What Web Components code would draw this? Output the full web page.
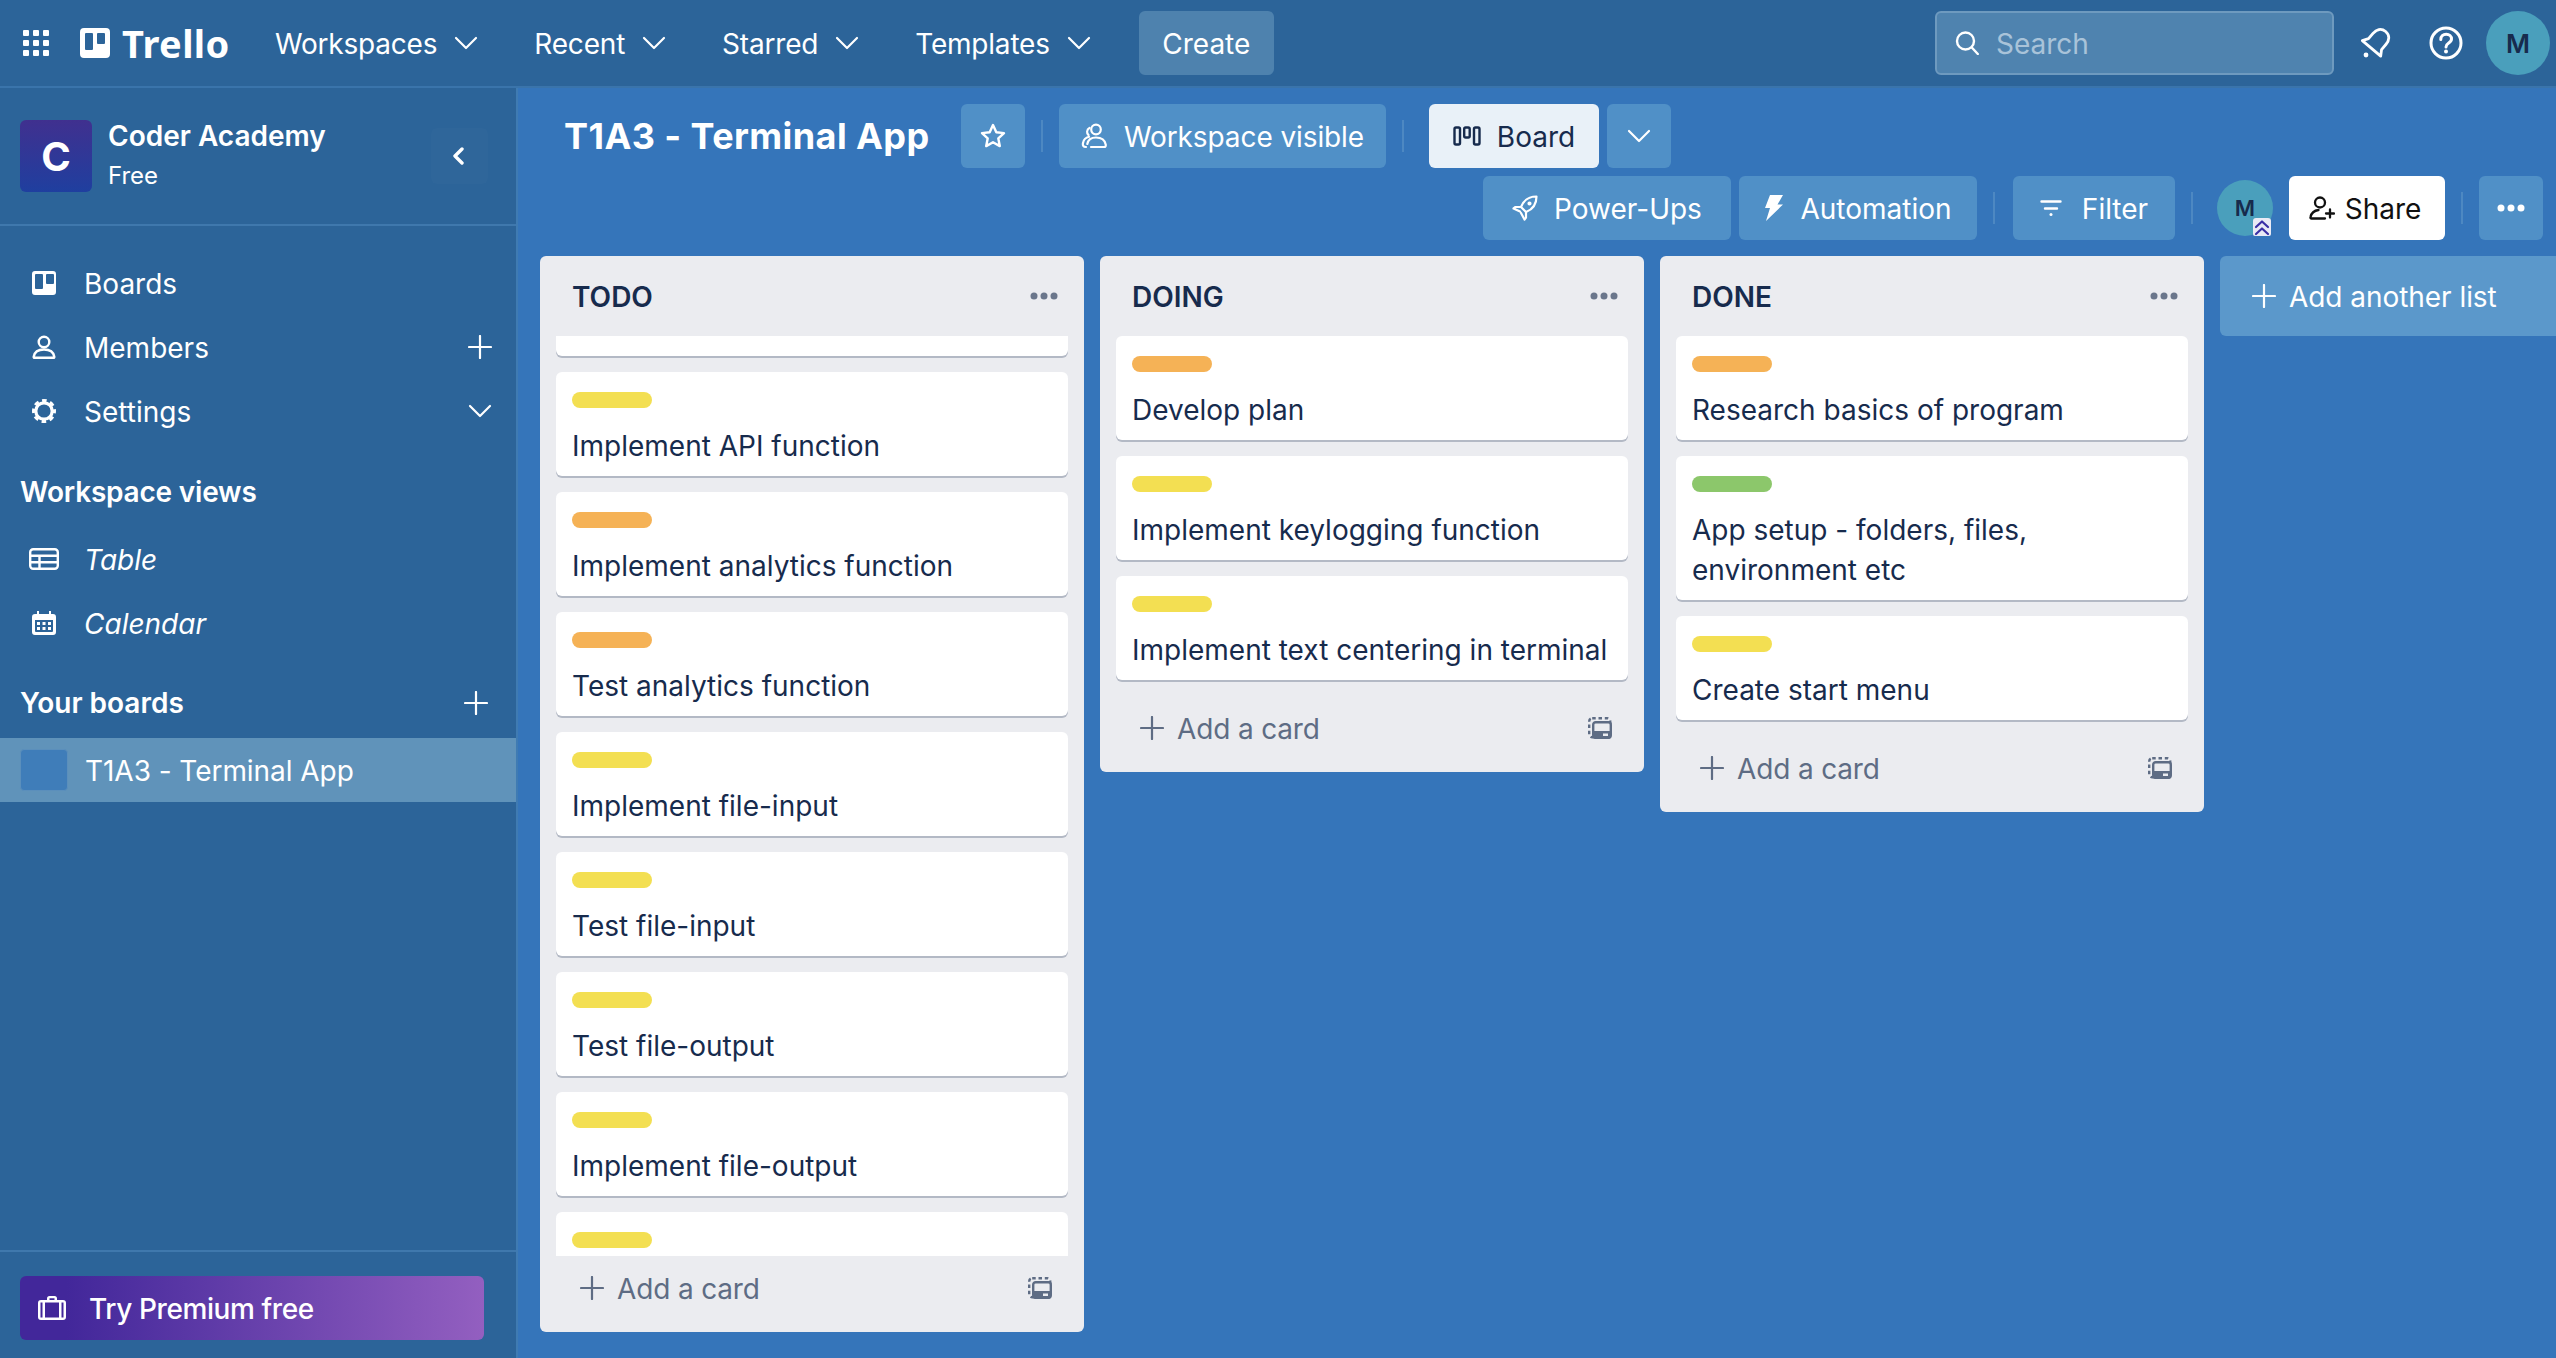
<!DOCTYPE html>
<html lang="en">
<head>
<meta charset="utf-8">
<title>T1A3 - Terminal App | Trello</title>
<style>
  html, body { margin: 0; height: 100%; overflow: hidden; background: #3575ba; }
  body { font-family: Inter, "Liberation Sans", sans-serif; font-size: 28px; color: #172b4d; }
</style>
</head>
<body>
<tr-app>
  <tr-topbar slot="top"></tr-topbar>
  <tr-sidebar slot="side"></tr-sidebar>
  <tr-board>
    <tr-list name="TODO" offset="84">
      <tr-card color="yellow"></tr-card>
      <tr-card color="yellow">Implement API function</tr-card>
      <tr-card color="orange">Implement analytics function</tr-card>
      <tr-card color="orange">Test analytics function</tr-card>
      <tr-card color="yellow">Implement file-input</tr-card>
      <tr-card color="yellow">Test file-input</tr-card>
      <tr-card color="yellow">Test file-output</tr-card>
      <tr-card color="yellow">Implement file-output</tr-card>
      <tr-card color="yellow"></tr-card>
    </tr-list>
    <tr-list name="DOING">
      <tr-card color="orange">Develop plan</tr-card>
      <tr-card color="yellow">Implement keylogging function</tr-card>
      <tr-card color="yellow">Implement text centering in terminal</tr-card>
    </tr-list>
    <tr-list name="DONE">
      <tr-card color="orange">Research basics of program</tr-card>
      <tr-card color="green">App setup - folders, files, environment etc</tr-card>
      <tr-card color="yellow">Create start menu</tr-card>
    </tr-list>
  </tr-board>
</tr-app>

<script>
const line = 'fill="none" stroke="currentColor" stroke-linecap="round" stroke-linejoin="round"';
const ICONS = {
  grid: [26, 26, [0, 10, 20].map((y) => [0, 10, 20].map((x) => `<rect x="${x}" y="${y}" width="6" height="6" rx="1" fill="currentColor"/>`).join('')).join('')],
  logo: [30, 30, `<path fill="currentColor" fill-rule="evenodd" d="M4 0h22a4 4 0 0 1 4 4v22a4 4 0 0 1-4 4H4a4 4 0 0 1-4-4V4a4 4 0 0 1 4-4zM6 5a1 1 0 0 0-1 1v15a1 1 0 0 0 1 1h6a1 1 0 0 0 1-1V6a1 1 0 0 0-1-1zM18 5a1 1 0 0 0-1 1v9a1 1 0 0 0 1 1h6a1 1 0 0 0 1-1V6a1 1 0 0 0-1-1z"/>`],
  chevron: [24, 14, `<path ${line} stroke-width="2.2" d="M2 2l10 10L22 2"/>`],
  back: [12, 18, `<path ${line} stroke-width="3.4" d="M10 2L3 9l7 7"/>`],
  plus: [24, 24, `<path ${line} stroke-width="2.2" d="M12 1v22M1 12h22"/>`],
  star: [26, 26, `<path ${line} stroke-width="2.4" d="M13 2l3.3 7.2 7.7.9-5.7 5.3 1.5 7.7-6.800-3.900-6.800 3.900 1.500-7.700L2 10.100l7.700-.9z"/>`],
  people: [26, 26, `<g ${line} stroke-width="2.2"><circle cx="15" cy="6.500" r="4.800"/><path d="M5 24c-2.800 0-3.500-1.500-3-4 .7-3.800 2.800-5.500 6-6.200M10 24h13c1.500 0 2-1 1.700-2.500-.8-4.300-4-7-9.700-7s-8 2.500-8.700 6.500"/><path d="M7.500 12c-2-1.500-2-5.500 1-7"/></g>`],
  bars: [28, 20, `<g ${line} stroke-width="2.400"><rect x="1.500" y="1.500" width="5.500" height="17" rx="1.500"/><rect x="11.200" y="1.500" width="5.500" height="10" rx="1.500"/><rect x="21" y="1.500" width="5.500" height="17" rx="1.500"/></g>`],
  rocket: [26, 26, `<g ${line} stroke-width="2.200"><path d="M24.500 1.500c-7.500 0-13 4-15.500 10.500l5 5c6.500-2.500 10.500-8 10.500-15.500z"/><path d="M9 12H3.500l-2 1.500 6.500 3M14 17v5.500l-1.500 2-3.500-6.500"/><circle cx="17.500" cy="8.500" r="1" fill="currentColor"/></g>`],
  bolt: [20, 26, `<path fill="currentColor" d="M6 0h13l-5.500 9.500H19L2 26l4-13H1z"/>`],
  filter: [22, 16, `<path ${line} stroke-width="2.400" d="M1.500 1.500h19M5 8.500h12"/><circle cx="11" cy="14.500" r="1.500" fill="currentColor"/>`],
  share: [26, 24, `<g ${line} stroke-width="2.300"><circle cx="11" cy="6.500" r="5"/><path d="M16 22.500H2.500c-.8 0-1.300-.6-1-1.500 1-4.500 4-6.500 8-7"/><path d="M17 17.500h8M21 13.500v8"/></g>`],
  dots: [28, 8, `<g fill="currentColor"><circle cx="4" cy="4" r="3.500"/><circle cx="14" cy="4" r="3.500"/><circle cx="24" cy="4" r="3.500"/></g>`],
  search: [24, 24, `<g ${line} stroke-width="2.400"><circle cx="10.500" cy="10" r="8.500"/><path d="M16.800 16.500l6 6.500"/></g>`],
  bell: [34, 34, `<g transform="rotate(40 17 17)" ${line} stroke-width="2.800"><path d="M17 2c-6 0-8.500 4.500-8.500 9.500v7L5 24h24l-3.500-5.500v-7C25.500 6.500 23 2 17 2z"/></g><circle cx="7" cy="29" r="2.400" fill="currentColor"/>`],
  help: [34, 34, `<circle cx="17" cy="17" r="15" ${line} stroke-width="3"/><path ${line} stroke-width="3" d="M11.800 13.500c0-3.200 2.300-5.200 5.400-5.200s5.300 2 5.300 4.800c0 4.300-5.500 3.700-5.500 7.900"/><circle cx="17" cy="25.500" r="2" fill="currentColor"/>`],
  boards: [24, 24, `<path fill="currentColor" fill-rule="evenodd" d="M3 0h18a3 3 0 0 1 3 3v18a3 3 0 0 1-3 3H3a3 3 0 0 1-3-3V3a3 3 0 0 1 3-3zM4 3a1 1 0 0 0-1 1v13a1 1 0 0 0 1 1h6a1 1 0 0 0 1-1V4a1 1 0 0 0-1-1zM15 3a1 1 0 0 0-1 1v8a1 1 0 0 0 1 1h6a1 1 0 0 0 1-1V4a1 1 0 0 0-1-1z"/>`],
  member: [24, 24, `<g ${line} stroke-width="2.400"><circle cx="12" cy="7" r="5.300"/><path d="M2.500 22.800h19c.6 0 .9-.5.800-1.100-.7-4.200-4.300-7.200-10.300-7.200s-9.600 3-10.300 7.200c-.1.600.2 1.100.8 1.100z"/></g>`],
  gear: [24, 24, `<circle cx="12" cy="12" r="8.200" fill="none" stroke="currentColor" stroke-width="3.200"/><circle cx="12" cy="12" r="10.500" fill="none" stroke="currentColor" stroke-width="3" stroke-dasharray="4.600 3.650" stroke-dashoffset="2.300"/>`],
  table: [30, 22, `<g ${line} stroke-width="2.400"><rect x="1.200" y="1.200" width="27.600" height="19.600" rx="3"/><path d="M1.500 7.800h27M1.500 14.200h27M10.500 7.800v13"/></g>`],
  calendar: [24, 24, `<path fill="currentColor" fill-rule="evenodd" d="M5 0h2v3h10V0h2v3h2a3 3 0 0 1 3 3v15a3 3 0 0 1-3 3H3a3 3 0 0 1-3-3V6a3 3 0 0 1 3-3h2zM3 9v11a1 1 0 0 0 1 1h16a1 1 0 0 0 1-1V9zM5 11h3v3H5zM10.500 11h3v3h-3zM16 11h3v3h-3zM5 16h3v3H5zM10.500 16h3v3h-3zM16 16h3v3h-3z"/>`],
  template: [24, 22, `<rect x="1.200" y="1.200" width="21" height="19" rx="3" fill="none" stroke="currentColor" stroke-width="2.400" stroke-dasharray="3.500 2.800"/><rect x="5.200" y="5.200" width="17.600" height="15.600" rx="2.500" fill="#ebecf0" stroke="currentColor" stroke-width="2.400"/><path fill="currentColor" d="M5 14h18v5a3 3 0 0 1-3 3H8a3 3 0 0 1-3-3zM15 16.500v2.500h5v-2.500z"/>`],
  briefcase: [28, 24, `<path fill="currentColor" fill-rule="evenodd" d="M9 4V2.500A2.500 2.500 0 0 1 11.500 0h5A2.500 2.500 0 0 1 19 2.500V4h6a3 3 0 0 1 3 3v14a3 3 0 0 1-3 3H3a3 3 0 0 1-3-3V7a3 3 0 0 1 3-3zM11.500 2.200V4h5V2.200zM2.500 6.500v15h2v-15zM7 6.500v15h14v-15zM23.500 6.500v15h2v-15z"/>`],
  upgrade: [16, 17, `<path ${line} stroke-width="2.200" d="M2 8l6-5.500L14 8M2 15l6-5.500L14 15"/>`],
};

class TrIcon extends HTMLElement {
  connectedCallback() {
    const [w, h, body] = ICONS[this.getAttribute('name')];
    this.attachShadow({ mode: 'open' }).innerHTML = `
      <style>:host { display: inline-flex; flex: none; } svg { display: block; }</style>
      <svg width="${w}" height="${h}" viewBox="0 0 ${w} ${h}">${body}</svg>`;
  }
}
customElements.define('tr-icon', TrIcon);

// button used in the top bar and in the board header
class TrButton extends HTMLElement {
  static get styles() {
    return /*css*/ `
      :host {
        display: inline-flex;
        align-items: center;
        justify-content: center;
        flex: none;
        gap: var(--gap, 16px);
        height: 64px;
        box-sizing: border-box;
        border-radius: 6px;
        background: #5090c7;
        color: #fff;
      }
      :host([light]) { background: #e9f1f8; color: #172b4d; }
      :host([white]) { background: #fff; color: #111; }
      .txt { padding-top: 2px; }
    `;
  }

  connectedCallback() {
    const icon = this.getAttribute('icon');
    this.attachShadow({ mode: 'open' }).innerHTML = /*html*/ `
      <style>${TrButton.styles}</style>
      ${icon ? `<tr-icon name="${icon}"></tr-icon>` : ''}
      ${this.textContent.trim() ? '<span class="txt"><slot></slot></span>' : ''}
    `;
    this.style.width = `${this.getAttribute('w')}px`;
  }
}
customElements.define('tr-button', TrButton);

class TrAvatar extends HTMLElement {
  connectedCallback() {
    const size = this.getAttribute('size');
    this.attachShadow({ mode: 'open' }).innerHTML = /*html*/ `
      <style>
        :host {
          display: inline-flex; align-items: center; justify-content: center; flex: none; position: relative;
          width: ${size}px; height: ${size}px; border-radius: 50%;
          background: #4a9fbc; color: #172b4d; font-size: ${this.getAttribute('text')}px; font-weight: 600;
        }
        .badge {
          position: absolute; right: 2px; bottom: 0; width: 18px; height: 18px; border-radius: 3px 3px 2px 2px;
          display: flex; align-items: center; justify-content: center;
          background: #e9eaf5; color: #3a2fa5;
        }
      </style>
      M
      ${this.hasAttribute('badge') ? '<span class="badge"><tr-icon name="upgrade"></tr-icon></span>' : ''}
    `;
  }
}
customElements.define('tr-avatar', TrAvatar);

class TrTopbar extends HTMLElement {
  static get styles() {
    return /*css*/ `
      :host {
        display: flex;
        align-items: center;
        height: 86px;
        border-bottom: 2px solid #3a74ab;
        background: #2c6499;
        color: #fff;
        font-size: 28px;
      }
      .apps { margin-left: 23px; }
      .logo { margin-left: 31px; }
      .word { margin-left: 12px; width: 108px; font-family: "Noto Sans", sans-serif; font-size: 38px; font-weight: 700; line-height: 1; letter-spacing: .4px; }
      .menu { display: flex; align-items: center; gap: 17px; margin-left: 56px; letter-spacing: -.2px; }
      .menu span { padding-top: 2px; }
      .menu.first { margin-left: 45px; }
      .create { margin-left: 48px; background: #4e82ae; }
      .search {
        display: flex; align-items: center; gap: 17px;
        margin-left: auto; width: 399px; height: 64px; box-sizing: border-box; padding-left: 18px;
        border: 2px solid #6e9abf; border-radius: 6px; background: #4f83af;
      }
      .hint { padding-top: 2px; color: #a9c3d9; }
      .bell { margin-left: 25px; }
      .help { margin-left: 36px; }
      tr-avatar { margin-left: 23px; margin-right: 6px; }
    `;
  }

  connectedCallback() {
    const menus = ['Workspaces', 'Recent', 'Starred', 'Templates'];
    this.attachShadow({ mode: 'open' }).innerHTML = /*html*/ `
      <style>${TrTopbar.styles}</style>
      <tr-icon class="apps" name="grid"></tr-icon>
      <tr-icon class="logo" name="logo"></tr-icon>
      <span class="word">Trello</span>
      ${menus.map((m, i) => `<div class="menu ${i ? '' : 'first'}"><span>${m}</span><tr-icon name="chevron"></tr-icon></div>`).join('')}
      <tr-button class="create" w="135">Create</tr-button>
      <div class="search"><tr-icon name="search"></tr-icon><span class="hint">Search</span></div>
      <tr-icon class="bell" name="bell"></tr-icon>
      <tr-icon class="help" name="help"></tr-icon>
      <tr-avatar size="64" text="26"></tr-avatar>
    `;
  }
}
customElements.define('tr-topbar', TrTopbar);

class TrSidebar extends HTMLElement {
  static get styles() {
    return /*css*/ `
      :host {
        display: flex;
        flex-direction: column;
        width: 516px;
        border-right: 2px solid #3f7bb3;
        background: #2c6499;
        color: #fff;
      }
      .team {
        display: flex; align-items: center; height: 138px; flex: none; box-sizing: border-box;
        padding-left: 20px; border-bottom: 2px solid #3f78ad;
      }
      .tile {
        display: flex; align-items: center; justify-content: center; width: 72px; height: 72px; border-radius: 6px;
        background: linear-gradient(#40308f, #1f3f9f); font-size: 40px; font-weight: 700;
      }
      .names { margin-left: 16px; padding-top: 2px; flex: 1; }
      .names b { display: block; font-weight: 600; line-height: 36px; }
      .names span { display: block; padding-top: 2px; font-size: 24px; line-height: 40px; }
      .back {
        display: flex; align-items: center; justify-content: center; width: 57px; height: 56px; box-sizing: border-box;
        margin-right: 28px; padding-right: 3px; border-radius: 6px; background: rgba(255,255,255,.015);
      }
      nav { padding-top: 25px; }
      .row { display: flex; align-items: center; height: 64px; padding-left: 32px; padding-right: 24px; }
      .row tr-icon:first-child { width: 30px; justify-content: center; margin-left: -3px; }
      .label { margin-left: 25px; flex: 1; padding-top: 1px; }
      em.label { font-style: italic; }
      h3 { display: flex; align-items: center; justify-content: space-between; height: 64px; margin: 0; padding: 0 28px 0 20px; font-size: 28px; font-weight: 600; }
      .views { margin-top: 17px; margin-bottom: 3px; letter-spacing: -.2px; }
      .mine { margin-top: 16px; margin-bottom: 3px; }
      .current { background: #6093ba; }
      .thumb { width: 48px; height: 42px; flex: none; margin-left: -12px; box-sizing: border-box; border: 1px solid #5b8fbc; border-radius: 4px; background: #3f7db9; }
      .current .label { margin-left: 17px; letter-spacing: -.05px; }
      .foot { margin-top: auto; border-top: 2px solid #3f78ad; padding: 24px 32px 18px 20px; }
      .trial {
        display: flex; align-items: center; gap: 23px; height: 64px; padding-left: 18px; border-radius: 6px;
        background: linear-gradient(90deg, #42279a 10%, #935fc0); font-weight: 500; letter-spacing: -.4px;
      }
      .trial span { padding-top: 2px; }
    `;
  }

  connectedCallback() {
    this.attachShadow({ mode: 'open' }).innerHTML = /*html*/ `
      <style>${TrSidebar.styles}</style>
      <div class="team">
        <div class="tile">C</div>
        <div class="names"><b>Coder Academy</b><span>Free</span></div>
        <div class="back"><tr-icon name="back"></tr-icon></div>
      </div>
      <nav>
        <div class="row"><tr-icon name="boards"></tr-icon><span class="label">Boards</span></div>
        <div class="row"><tr-icon name="member"></tr-icon><span class="label">Members</span><tr-icon name="plus"></tr-icon></div>
        <div class="row"><tr-icon name="gear"></tr-icon><span class="label">Settings</span><tr-icon name="chevron"></tr-icon></div>
        <h3 class="views">Workspace views</h3>
        <div class="row"><tr-icon name="table"></tr-icon><em class="label">Table</em></div>
        <div class="row"><tr-icon name="calendar"></tr-icon><em class="label">Calendar</em></div>
        <h3 class="mine">Your boards<tr-icon name="plus"></tr-icon></h3>
        <div class="row current"><div class="thumb"></div><span class="label">T1A3 - Terminal App</span></div>
      </nav>
      <div class="foot">
        <div class="trial"><tr-icon name="briefcase"></tr-icon><span>Try Premium free</span></div>
      </div>
    `;
  }
}
customElements.define('tr-sidebar', TrSidebar);

class TrCard extends HTMLElement {
  static get styles() {
    return /*css*/ `
      :host {
        display: block;
        flex: none;
        box-sizing: border-box;
        padding: 20px 16px 12px;
        border-radius: 6px;
        background: #fff;
        box-shadow: 0 2px 0 #b3b9c5;
        line-height: 40px;
        color: #172b4d;
      }
      .mark { width: 80px; height: 16px; margin-bottom: 16px; border-radius: 8px; }
      .yellow { background: #f3df52; }
      .orange { background: #f5b256; }
      .green { background: #8cc76b; }
      .text { min-height: 40px; padding-top: 2px; margin-bottom: -2px; }
    `;
  }

  connectedCallback() {
    this.attachShadow({ mode: 'open' }).innerHTML = /*html*/ `
      <style>${TrCard.styles}</style>
      <div class="mark ${this.getAttribute('color')}"></div>
      <div class="text"><slot></slot></div>
    `;
  }
}
customElements.define('tr-card', TrCard);

class TrList extends HTMLElement {
  static get styles() {
    return /*css*/ `
      :host {
        display: flex;
        flex-direction: column;
        flex: none;
        width: 544px;
        max-height: 100%;
        box-sizing: border-box;
        border-radius: 6px;
        background: #ebecf0;
      }
      header {
        display: flex; align-items: center; justify-content: space-between; flex: none;
        height: 80px; padding: 0 26px 0 32px; font-weight: 600; color: #172b4d;
      }
      header span { padding-top: 2px; }
      header tr-icon { color: #6b778c; }
      .clip { min-height: 0; overflow: hidden; flex: 0 1 auto; padding: 0 16px; }
      .cards { display: flex; flex-direction: column; gap: 16px; padding-bottom: 16px; }
      footer {
        display: flex; align-items: center; flex: none; height: 64px; margin-bottom: 12px;
        padding: 0 32px 0 40px; color: #5e6c84;
      }
      .add { margin-left: 13px; flex: 1; padding-top: 1px; letter-spacing: -.15px; }
    `;
  }

  connectedCallback() {
    const offset = this.getAttribute('offset') || 0;
    this.attachShadow({ mode: 'open' }).innerHTML = /*html*/ `
      <style>${TrList.styles}</style>
      <header><span>${this.getAttribute('name')}</span><tr-icon name="dots"></tr-icon></header>
      <div class="clip"><div class="cards" style="margin-top:-${offset}px"><slot></slot></div></div>
      <footer><tr-icon name="plus"></tr-icon><span class="add">Add a card</span><tr-icon name="template"></tr-icon></footer>
    `;
  }
}
customElements.define('tr-list', TrList);

class TrBoard extends HTMLElement {
  static get styles() {
    return /*css*/ `
      :host {
        display: flex;
        flex-direction: column;
        min-width: 0;
        overflow: hidden;
        background: #3575ba;
        color: #fff;
      }
      .head { display: flex; align-items: center; flex: none; height: 64px; }
      .head.one { margin-top: 16px; padding-left: 46px; }
      .head.two { margin-top: 8px; justify-content: flex-end; padding-right: 13px; }
      h1 { width: 365px; margin: 0 32px 0 0; font-size: 36px; font-weight: 700; letter-spacing: .42px; color: #fff; white-space: nowrap; }
      i { flex: none; width: 2px; height: 32px; margin: 0 16px; background: #4d88c2; }
      .lists {
        display: flex; align-items: flex-start; gap: 16px; flex: 1; min-height: 0;
        margin: 16px 0 26px 22px;
      }
      .more {
        display: flex; align-items: center; gap: 13px; flex: none; width: 544px; height: 80px;
        box-sizing: border-box; padding-left: 32px; border-radius: 6px; background: #5b98cb;
      }
      .more span { padding-top: 2px; letter-spacing: -.05px; }
    `;
  }

  connectedCallback() {
    this.attachShadow({ mode: 'open' }).innerHTML = /*html*/ `
      <style>${TrBoard.styles}</style>
      <div class="head one">
        <h1>T1A3 - Terminal App</h1>
        <tr-button icon="star" w="64"></tr-button>
        <i></i>
        <tr-button icon="people" w="327" style="--gap:17px;letter-spacing:-.1px">Workspace visible</tr-button>
        <i style="margin-right:25px"></i>
        <tr-button icon="bars" w="170" light>Board</tr-button>
        <tr-button icon="chevron" w="64" style="margin-left:8px"></tr-button>
      </div>
      <div class="head two">
        <tr-button icon="rocket" w="248">Power-Ups</tr-button>
        <tr-button icon="bolt" w="238" style="margin-left:8px">Automation</tr-button>
        <i style="margin-right:18px"></i>
        <tr-button icon="filter" w="162" style="--gap:20px">Filter</tr-button>
        <i style="margin-right:24px"></i>
        <tr-avatar size="56" text="22" badge></tr-avatar>
        <tr-button icon="share" w="156" white style="margin-left:16px;--gap:10px;padding-right:4px">Share</tr-button>
        <i></i>
        <tr-button icon="dots" w="64"></tr-button>
      </div>
      <div class="lists">
        <slot></slot>
        <div class="more"><tr-icon name="plus"></tr-icon><span>Add another list</span></div>
      </div>
    `;
  }
}
customElements.define('tr-board', TrBoard);

class TrApp extends HTMLElement {
  connectedCallback() {
    this.attachShadow({ mode: 'open' }).innerHTML = /*html*/ `
      <style>
        :host { display: grid; grid-template: 88px 1270px / 518px 2038px; width: 2556px; height: 1358px; overflow: hidden; }
        ::slotted([slot="top"]) { grid-column: 1 / 3; }
      </style>
      <slot name="top"></slot>
      <slot name="side"></slot>
      <slot></slot>
    `;
  }
}
customElements.define('tr-app', TrApp);
</script>
</body>
</html>
